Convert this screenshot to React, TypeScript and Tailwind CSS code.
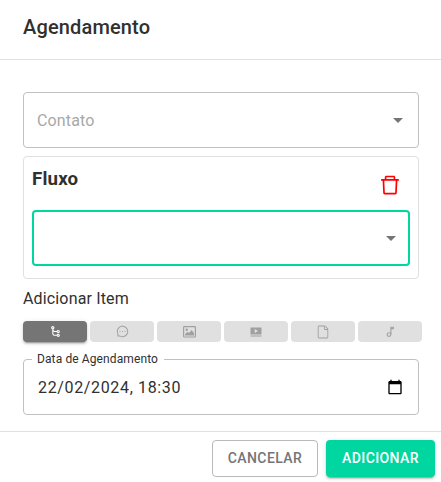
import type { ReactNode } from "react";
import { AiOutlineDelete, AiOutlineMessage } from "react-icons/ai";
import { TiFlowChildren } from "react-icons/ti";
import { GoFile } from "react-icons/go";

function Caret() {
  return (
    <svg width="24" height="24" viewBox="0 0 24 24" fill="#757575">
      <path d="M7 10l5 5 5-5z" />
    </svg>
  );
}

function PictureIcon() {
  return (
    <svg width="13" height="12" viewBox="0 0 13 12">
      <rect x="0.6" y="0.6" width="11.8" height="10.4" rx="0.8" fill="none" stroke="currentColor" strokeWidth="1.2" />
      <circle cx="3.8" cy="3.7" r="1.2" fill="currentColor" />
      <path d="M2 9.6V8.2L4.4 5.8l1.5 1.3L8.7 4 11 7.2v2.4z" fill="currentColor" />
    </svg>
  );
}

function VideoIcon() {
  return (
    <svg width="12" height="10" viewBox="0 0 12 10" fill="currentColor">
      <path fillRule="evenodd" d="M0.5 0.5h11v7H.5zM4.7 2v4L8 4z" />
      <path d="M0.5 8.5h11v1H.5z" />
    </svg>
  );
}

function NoteIcon() {
  return (
    <svg width="9" height="12" viewBox="0 0 9 12" fill="none" stroke="currentColor" strokeWidth="1.1">
      <circle cx="3" cy="8.6" r="1.8" />
      <path d="M4.9 8.6V1.2h2.5v1.4H4.9" />
    </svg>
  );
}

const items: { name: string; icon: ReactNode }[] = [
  { name: "Fluxo", icon: <TiFlowChildren size={13} /> },
  { name: "Mensagem", icon: <AiOutlineMessage size={13} /> },
  { name: "Imagem", icon: <PictureIcon /> },
  { name: "Vídeo", icon: <VideoIcon /> },
  { name: "Arquivo", icon: <GoFile size={14} /> },
  { name: "Áudio", icon: <NoteIcon /> },
];

export default function App() {
  return (
    <div className="flex h-[482px] w-[441px] flex-col bg-white font-[Roboto,sans-serif] text-base tracking-[0.15px] text-[#303030]">
      <header className="h-[59px] shrink-0 px-[23px] pt-[11px]">
        <h2 className="text-xl leading-8 font-medium">Agendamento</h2>
      </header>
      <main className="h-[373px] shrink-0 border-y border-[#e0e0e0] px-[23px] pt-8">
        <div className="flex h-14 w-[396px] items-center justify-between rounded border border-[#c0c0c0] pr-2 pl-[13px]">
          <span className="pt-0.5 text-[#a8a8a8]">Contato</span>
          <Caret />
        </div>
        <section className="mt-2 h-[123px] w-[396px] rounded border border-[#e0e0e0] px-2">
          <div className="flex h-[53px] justify-between pr-2">
            <h3 className="pt-[11px] text-[18.72px] leading-[22px] font-bold tracking-[0.15px]">Fluxo</h3>
            <AiOutlineDelete className="mt-4" size={24} color="#f00" />
          </div>
          <div className="flex h-14 w-[378px] items-center justify-end rounded border-2 border-[#00d69f] pr-[5px]">
            <Caret />
          </div>
        </section>
        <p className="mt-2 leading-6">Adicionar Item</p>
        <div className="mt-2.5 flex gap-[3px]">
          {items.map((item, i) => (
            <button
              key={item.name}
              aria-label={item.name}
              className={
                "flex h-[21px] w-16 shrink-0 items-center justify-center rounded " +
                (i === 0
                  ? "bg-[#757575] text-white shadow-[0_3px_1px_-2px_rgba(0,0,0,.2),0_2px_2px_0_rgba(0,0,0,.14),0_1px_5px_0_rgba(0,0,0,.12)]"
                  : "bg-[#e0e0e0] text-[#a0a0a0]")
              }
            >
              {item.icon}
            </button>
          ))}
        </div>
        <fieldset className="mt-[9px] h-[64px] w-[396px] rounded border border-[#c0c0c0] pl-[8px]">
          <legend className="w-[132px] pl-[5px] text-xs leading-4 tracking-[0.11px] whitespace-nowrap">Data de Agendamento</legend>
          <div className="flex items-start justify-between pt-[8px] pr-[15px] pl-[6px]">
            <span className="pt-px leading-6 tracking-[0.65px]">22/02/2024, 18:30</span>
            <svg className="mt-1" width="16" height="16" viewBox="0 0 24 24">
              <path d="M20 3h-1V1h-2v2H7V1H5v2H4c-1.1 0-2 .9-2 2v16c0 1.1.9 2 2 2h16c1.1 0 2-.9 2-2V5c0-1.1-.9-2-2-2zm0 18H4V8h16v13z" />
            </svg>
          </div>
        </fieldset>
      </main>
      <footer className="flex justify-end gap-2 pt-2 pr-1.5 text-sm font-medium tracking-[0.4px]">
        <button className="h-[37px] w-[106px] rounded border border-[#bababa] pb-0.5 text-[#757575]">CANCELAR</button>
        <button className="h-[37px] w-[109px] rounded bg-[#00d69f] pb-0.5 text-white shadow-[0_3px_1px_-2px_rgba(0,0,0,.2),0_2px_2px_0_rgba(0,0,0,.14),0_1px_5px_0_rgba(0,0,0,.12)]">
          ADICIONAR
        </button>
      </footer>
    </div>
  );
}
